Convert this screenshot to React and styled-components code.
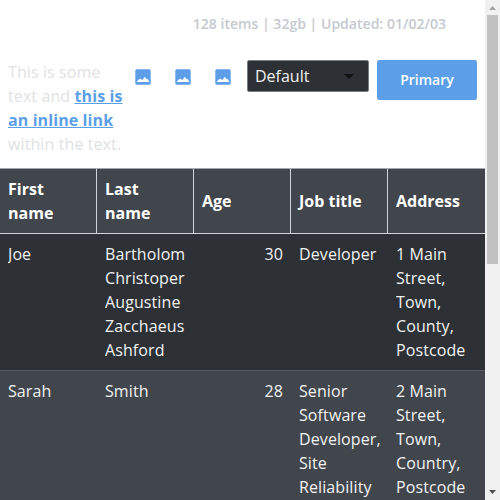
import React from "react";
import styled, { createGlobalStyle } from "styled-components";

const Global = createGlobalStyle`
  * { box-sizing: border-box; }
  html, body { margin: 0; height: 500px; overflow: hidden; background: #fff; }
  body { font-family: "Open Sans", sans-serif; font-size: 16px; line-height: 24px; letter-spacing: 0.1px; }
`;

const Frame = styled.div`
  display: flex;
  width: 500px;
  height: 500px;
  overflow: hidden;
`;

const Page = styled.main`
  flex: 0 0 485px;
  overflow: hidden;
`;

const Meta = styled.div`
  height: 60px;
  padding: 12px 39px 0 0;
  text-align: right;
  font-size: 14px;
  font-weight: 600;
  letter-spacing: 0.02px;
  color: #c5c9d0;
`;

const Toolbar = styled.div`
  display: flex;
  align-items: flex-start;
  height: 108px;
  padding: 0 8px;
`;

const Description = styled.p`
  width: 115px;
  margin: 0;
  color: #e1e2e3;
`;

const InlineLink = styled.a`
  color: #5c9fe8;
  font-weight: 700;
  text-decoration: underline;
`;

const IconGroup = styled.div`
  display: flex;
`;

const IconButton = styled.button`
  display: flex;
  align-items: center;
  justify-content: center;
  width: 40px;
  height: 34px;
  padding: 0;
  border: 0;
  background: none;
  color: #5c9fe8;
`;

const Select = styled.div`
  display: flex;
  align-items: center;
  justify-content: space-between;
  width: 122px;
  height: 32px;
  margin-left: 4px;
  padding: 0 14px 0 7px;
  border: 1px solid #777e88;
  border-radius: 2px;
  background: #2d3034;
  color: #f0f1f2;
  letter-spacing: 0;
`;

const Primary = styled.button`
  width: 100px;
  height: 40px;
  margin-left: 8px;
  padding: 0;
  border: 0;
  border-radius: 2px;
  background: #5c9fe8;
  color: #fff;
  font: 600 14px/24px "Open Sans", sans-serif;
`;

const Table = styled.table`
  width: 485px;
  table-layout: fixed;
  border-collapse: separate;
  border-spacing: 0;
  color: #f1f2f3;
`;

const HeadCell = styled.th`
  padding: 8px;
  border-top: 1px solid #a5a9af;
  border-bottom: 1px solid #d0d3d7;
  border-right: ${(p) => (p.$last ? "0" : "1px solid #d0d3d7")};
  background: #41454c;
  color: #fff;
  font-weight: 700;
  letter-spacing: 0;
  text-align: left;
  vertical-align: middle;
`;

const Row = styled.tr`
  background: ${(p) => (p.$alt ? "#41454c" : "#2d3034")};
`;

const Cell = styled.td`
  padding: 8px;
  border-bottom: 1px solid #55585d;
  text-align: ${(p) => (p.$numeric ? "right" : "left")};
  vertical-align: top;
`;

const CellText = styled.div`
  overflow: hidden;
`;

const Scrollbar = styled.div`
  display: flex;
  flex-direction: column;
  align-items: center;
  justify-content: space-between;
  width: 15px;
  height: 500px;
  background: #f1f1f1;
`;

const ScrollArrow = styled.svg`
  display: block;
  flex: 0 0 15px;
`;

const Track = styled.div`
  flex: 1;
  width: 11px;
`;

const Thumb = styled.div`
  height: 249px;
  background: #c1c1c1;
`;

const ImageIcon = () => (
  <svg width="16" height="16" viewBox="0 0 16 16">
    <path
      fill="currentColor"
      fillRule="evenodd"
      d="M1.8.3h12.4a1.5 1.5 0 0 1 1.5 1.5v12.4a1.5 1.5 0 0 1-1.5 1.5H1.8a1.5 1.5 0 0 1-1.5-1.5V1.8A1.5 1.5 0 0 1 1.8.3ZM2 13h12v-1l-1.7-2.2-.8.5L10 7.8 7.2 11 4.9 9.4 2 12.4Z"
    />
  </svg>
);

const columns = ["First name", "Last name", "Age", "Job title", "Address"];

const people = [
  ["Joe", "Bartholomew Christoper Augustine Zacchaeus Ashford", "30", "Developer", "1 Main Street, Town, County, Postcode"],
  ["Sarah", "Smith", "28", "Senior Software Developer, Site Reliability", "2 Main Street, Town, Country, Postcode"],
];

export default function App() {
  return (
    <Frame>
      <Global />
      <Page>
        <Meta>128 items | 32gb | Updated: 01/02/03</Meta>
        <Toolbar>
          <Description>
            This is some text and <InlineLink>this is an inline link</InlineLink> within the text.
          </Description>
          <IconGroup>
            {[0, 1, 2].map((n) => (
              <IconButton key={n} aria-label="Image">
                <ImageIcon />
              </IconButton>
            ))}
          </IconGroup>
          <Select>
            Default
            <svg width="10" height="5" viewBox="0 0 10 5">
              <path d="M0 0h10L5 5Z" fill="#101112" />
            </svg>
          </Select>
          <Primary>Primary</Primary>
        </Toolbar>
        <Table>
          <thead>
            <tr>
              {columns.map((name, i) => (
                <HeadCell key={name} $last={i === columns.length - 1}>{name}</HeadCell>
              ))}
            </tr>
          </thead>
          <tbody>
            {people.map((person, r) => (
              <Row key={person[0]} $alt={r % 2 === 1}>
                {person.map((value, i) => (
                  <Cell key={columns[i]} $numeric={i === 2}>
                    <CellText>{value}</CellText>
                  </Cell>
                ))}
              </Row>
            ))}
          </tbody>
        </Table>
      </Page>
      <Scrollbar>
        <ScrollArrow width="15" height="15" viewBox="0 0 15 15">
          <path d="M4 10h7L7.5 6Z" fill="#a3a3a3" />
        </ScrollArrow>
        <Track>
          <Thumb />
        </Track>
        <ScrollArrow width="15" height="15" viewBox="0 0 15 15">
          <path d="M4 5h7L7.5 9Z" fill="#505050" />
        </ScrollArrow>
      </Scrollbar>
    </Frame>
  );
}
